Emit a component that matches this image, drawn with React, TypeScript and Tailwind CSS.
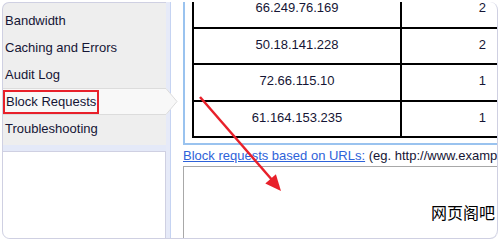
import React from "react";

const rows = [
  { ip: "66.249.76.169", n: "2" },
  { ip: "50.18.141.228", n: "2" },
  { ip: "72.66.115.10", n: "1" },
  { ip: "61.164.153.235", n: "1" },
];

export default function App() {
  return (
    <div className="w-[500px] h-[240px] bg-white overflow-hidden relative font-['Liberation_Sans',Arial,sans-serif] text-[13px] text-[#151535] pt-[2px] pl-[2px]">
      <div className="flex w-[496px] h-[237px] border-b border-[#cfd0e2] rounded-b-[8px]">
        {/* Left column */}
        <div className="w-[164px] flex flex-col">
          <div className="h-[143px] bg-[#eeeeee] border-l border-t border-[#cfd0e2] rounded-tl-[7px] pt-[4px] relative z-10">
            <div className="h-[27px] flex items-center pl-[2px]">Bandwidth</div>
            <div className="h-[27px] flex items-center pl-[2px]">Caching and Errors</div>
            <div className="h-[27px] flex items-center pl-[2px]">Audit Log</div>
            <div className="h-[27px] flex items-center bg-[#f8f8f8] border-y border-[#dcdcdc] relative">
              <span className="border-2 border-[#e8202a] px-[1px] h-[24px] leading-[20px] whitespace-nowrap">
                Block Requests
              </span>
              <svg
                className="absolute right-[-12px] top-[-1px]"
                width="12"
                height="27"
                viewBox="0 0 12 27"
              >
                <polygon points="0,0 11,13.5 0,27" fill="#f8f8f8" />
                <polyline points="0,0.5 11,13.5 0,26.5" fill="none" stroke="#dcdcdc" strokeWidth="1" />
              </svg>
            </div>
            <div className="h-[27px] flex items-center pl-[2px]">Troubleshooting</div>
          </div>
          <div className="h-[6px] bg-[#e4e9f8] border-l border-[#cfd0e2]" />
          <div className="flex-1 bg-white border-l border-t border-r border-[#cfd0e2] rounded-bl-[7px]" />
        </div>

        {/* Middle strip */}
        <div className="w-[5px] bg-[#e6eaf8] border-r border-[#c5d3f2]" />

        {/* Content */}
        <div className="flex-1 relative overflow-hidden border-r border-[#cfd0e2] rounded-tr-[8px] rounded-br-[8px] pl-[12px]">
          <div className="mt-[-19px] w-[420px] border-2 border-[#9ac3ef] pl-[7px] pt-[5px] pb-[5px]">
            <div className="border-l-2 border-b-2 border-black w-[320px]">
              {rows.map((r) => (
                <div key={r.ip} className="flex h-[36.5px] border-t-2 border-black">
                  <div className="w-[208px] border-r-2 border-black flex items-center justify-center pb-[3px]">
                    {r.ip}
                  </div>
                  <div className="flex-1 flex items-center justify-end pr-[26px] pb-[3px]">{r.n}</div>
                </div>
              ))}
            </div>
          </div>
          <div className="mt-[3px] leading-[15px] whitespace-nowrap">
            <span className="text-[#2e62d9] underline">Block requests based on URLs:</span>
            <span> (eg. http://www.example.com/)</span>
          </div>
          <div className="mt-[3px] w-[400px] h-[100px] border border-[#a8a8a8]" />
        </div>
      </div>

      {/* Red annotation arrow */}
      <svg className="absolute left-0 top-0 pointer-events-none" width="500" height="240" viewBox="0 0 500 240">
        <line x1="200" y1="97" x2="273" y2="181" stroke="#e8202a" strokeWidth="2.5" />
        <polygon points="281,191 265.3,183.5 275.9,174.3" fill="#e8202a" />
      </svg>

      {/* Watermark */}
      <div className="absolute left-[431px] top-[201px] text-[16px] leading-[22px] text-black font-['Noto_Sans_CJK_SC',sans-serif]">
        网页阁吧
      </div>
    </div>
  );
}
